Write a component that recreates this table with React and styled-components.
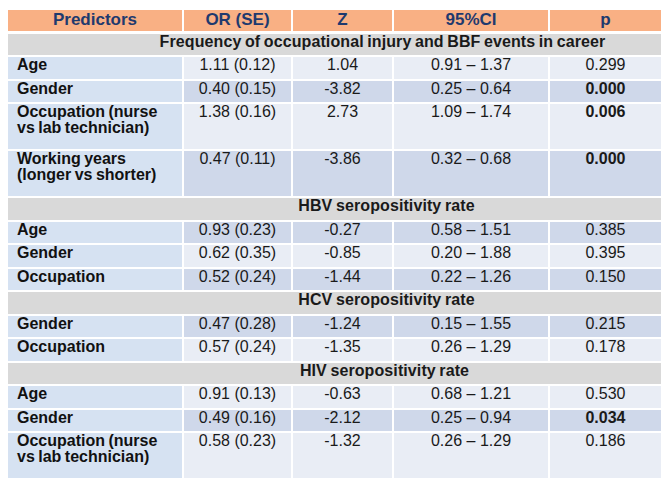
import React from "react";
import styled, { createGlobalStyle } from "styled-components";

const Global = createGlobalStyle`
  html, body { margin: 0; padding: 0; background: #ffffff; }
  body { font-family: "Liberation Sans", Arial, sans-serif; }
`;

const Page = styled.div`
  width: 670px;
  height: 488px;
  padding: 10px 0 0 8px;
  box-sizing: border-box;
  background: #ffffff;
`;

const Table = styled.div`
  display: grid;
  grid-template-columns: 174px 107px 99px 154px 111px;
  grid-auto-rows: 21.5px;
  column-gap: 2px;
  row-gap: 2px;
  width: 653px;
`;

const HeadCell = styled.div`
  background: #f9b084;
  color: #1f3a6e;
  font-weight: bold;
  font-size: 17px;
  line-height: 18px;
  text-align: center;
  padding-top: 1px;
  margin-bottom: 1px;
`;

const Section = styled.div`
  grid-column: 1 / -1;
  background: #d9d9d9;
  color: #1a1a1a;
  font-weight: bold;
  font-size: 16px;
  line-height: 16px;
  text-align: center;
  padding-left: ${(p) => p.$indent}px;
  letter-spacing: 0.1px;
  word-spacing: -1px;
`;

const LabelCell = styled.div`
  grid-row: span ${(p) => (p.$tall ? 2 : 1)};
  background: #d6e2f2;
  color: #111;
  font-weight: bold;
  font-size: 16px;
  line-height: 16px;
  padding-left: 9px;
  word-spacing: -1px;
`;

const DataCell = styled.div`
  grid-row: span ${(p) => (p.$tall ? 2 : 1)};
  background: ${(p) => (p.$dark ? "#cfd8ea" : "#e9edf5")};
  color: #1a1a1a;
  font-weight: ${(p) => (p.$bold ? "bold" : "normal")};
  font-size: 16px;
  line-height: 16px;
  text-align: center;
`;

const groups = [
  {
    title: "Frequency of occupational injury and BBF events in career",
    indent: 96,
    rows: [
      { label: ["Age"], v: ["1.11 (0.12)", "1.04", "0.91 – 1.37", "0.299"], dark: false },
      { label: ["Gender"], v: ["0.40 (0.15)", "-3.82", "0.25 – 0.64", "0.000"], bold: true, dark: true },
      { label: ["Occupation (nurse", "vs lab technician)"], v: ["1.38 (0.16)", "2.73", "1.09 – 1.74", "0.006"], bold: true, dark: false, tall: true },
      { label: ["Working years", "(longer vs shorter)"], v: ["0.47 (0.11)", "-3.86", "0.32 – 0.68", "0.000"], bold: true, dark: true, tall: true },
    ],
  },
  {
    title: "HBV seropositivity rate",
    indent: 104,
    rows: [
      { label: ["Age"], v: ["0.93 (0.23)", "-0.27", "0.58 – 1.51", "0.385"], dark: true },
      { label: ["Gender"], v: ["0.62 (0.35)", "-0.85", "0.20 – 1.88", "0.395"], dark: false },
      { label: ["Occupation"], v: ["0.52 (0.24)", "-1.44", "0.22 – 1.26", "0.150"], dark: true },
    ],
  },
  {
    title: "HCV seropositivity rate",
    indent: 104,
    rows: [
      { label: ["Gender"], v: ["0.47 (0.28)", "-1.24", "0.15 – 1.55", "0.215"], dark: true },
      { label: ["Occupation"], v: ["0.57 (0.24)", "-1.35", "0.26 – 1.29", "0.178"], dark: false },
    ],
  },
  {
    title: "HIV seropositivity rate",
    indent: 100,
    rows: [
      { label: ["Age"], v: ["0.91 (0.13)", "-0.63", "0.68 – 1.21", "0.530"], dark: false },
      { label: ["Gender"], v: ["0.49 (0.16)", "-2.12", "0.25 – 0.94", "0.034"], bold: true, dark: true },
      { label: ["Occupation (nurse", "vs lab technician)"], v: ["0.58 (0.23)", "-1.32", "0.26 – 1.29", "0.186"], dark: false, tall: true },
    ],
  },
];

const headers = ["Predictors", "OR (SE)", "Z", "95%CI", "p"];

export default function App() {
  return (
    <>
      <Global />
      <Page>
        <Table>
          {headers.map((h) => (
            <HeadCell key={h}>{h}</HeadCell>
          ))}
          {groups.map((g) => (
            <React.Fragment key={g.title}>
              <Section $indent={g.indent}>{g.title}</Section>
              {g.rows.map((r, i) => (
                <React.Fragment key={i}>
                  <LabelCell $tall={r.tall}>
                    {r.label.map((l, j) => (
                      <div key={j}>{l}</div>
                    ))}
                  </LabelCell>
                  {r.v.map((val, k) => (
                    <DataCell key={k} $tall={r.tall} $dark={r.dark} $bold={k === 3 && r.bold}>
                      {val}
                    </DataCell>
                  ))}
                </React.Fragment>
              ))}
            </React.Fragment>
          ))}
        </Table>
      </Page>
    </>
  );
}
